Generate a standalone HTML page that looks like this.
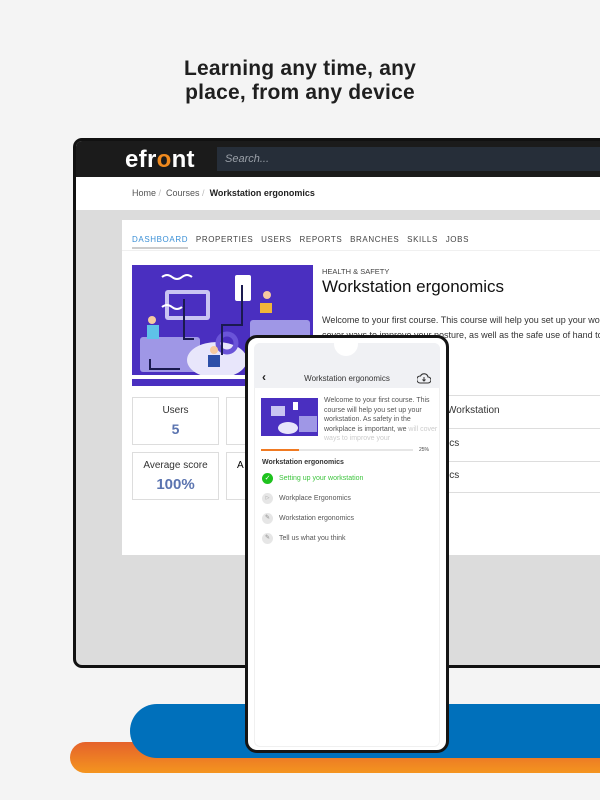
<!DOCTYPE html>
<html><head><meta charset="utf-8"><style>
*{margin:0;padding:0;box-sizing:border-box}
body{width:600px;height:800px;background:#f4f4f4;position:relative;overflow:hidden;font-family:"Liberation Sans",sans-serif}
.abs{position:absolute}
h1{position:absolute;top:57px;left:0;width:600px;text-align:center;font-size:21px;line-height:24px;font-weight:bold;color:#1f1f1f;letter-spacing:0.2px}
.laptop{left:73px;top:138px;width:540px;height:530px;border:3px solid #111;border-radius:9px;background:#dcdcdc;overflow:hidden}
.bar{left:0;top:0;width:100%;height:36px;background:#1b1b1b}
.logo{left:49px;top:5px;color:#fff;font-weight:bold;font-size:24px;letter-spacing:0.3px}
.search{left:141px;top:6px;width:400px;height:24px;background:#262e39;color:#9aa0a8;font-style:italic;font-size:11px;padding:6px 8px}
.crumb{left:0;top:36px;width:100%;height:33px;background:#fff;font-size:9px;color:#555;padding:11px 56px}
.card{left:46px;top:79px;width:500px;height:335px;background:#fff}
.tabs{left:10px;top:15px;font-size:8px;letter-spacing:0.6px;color:#444;word-spacing:5px}
.t{font-size:9px;color:#333}
.box{border:1px solid #ddd;background:#fff;text-align:center}
.phone{left:245px;top:335px;width:204px;height:418px;border:3px solid #151515;border-radius:12px;background:#fff;overflow:hidden}
.li{position:absolute;left:14px;font-size:7px;color:#555;display:flex;align-items:center}
.ic{width:11px;height:11px;border-radius:50%;background:#e6e6e6;margin-right:6px;display:inline-block;position:relative}
</style></head><body>
<h1>Learning any time, any<br>place, from any device</h1>

<div class="abs" style="left:70px;top:742px;width:560px;height:31px;background:linear-gradient(#e5622b,#f4951f);border-radius:16px"></div>
<div class="abs" style="left:130px;top:704px;width:500px;height:54px;background:#0070bb;border-radius:27px"></div>

<div class="abs laptop">
 <div class="abs bar">
  <div class="abs logo">efr<span style="color:#f08a1e">o</span>nt</div>
  <div class="abs search">Search...</div>
 </div>
 <div class="abs crumb">Home <span style="color:#bbb">/</span>&nbsp; Courses <span style="color:#bbb">/</span>&nbsp; <b style="color:#222">Workstation ergonomics</b></div>
 <div class="abs card">
  <div class="abs tabs"><span style="color:#3a8fd6;border-bottom:2px solid #ccc;padding-bottom:3px">DASHBOARD</span> PROPERTIES USERS REPORTS BRANCHES SKILLS JOBS</div>
  <div class="abs" style="left:0;top:30px;width:100%;height:1px;background:#f0f0f0"></div>
  <svg class="abs" style="left:10px;top:45px" width="181" height="121" viewBox="0 0 181 121">
   <rect width="181" height="121" fill="#4a2fc0"/>
   <rect x="33" y="25" width="45" height="30" rx="3" fill="#c9c4f2"/><rect x="37" y="29" width="37" height="22" fill="#4a2fc0"/>
   <rect x="103" y="10" width="16" height="26" rx="2" fill="#fff"/>
   <rect x="118" y="55" width="60" height="50" rx="3" fill="#9f97e6"/>
   <rect x="8" y="72" width="60" height="35" rx="3" fill="#9f97e6"/>
   <ellipse cx="85" cy="95" rx="30" ry="18" fill="#e8e6fb"/>
   <circle cx="95" cy="78" r="9" fill="none" stroke="#6a54d8" stroke-width="5"/>
   <path d="M30 12q5-4 10 0t10 0t10 0" stroke="#fff" fill="none" stroke-width="2"/>
   <path d="M30 42q5-4 10 0t10 0" stroke="#fff" fill="none" stroke-width="2"/>
   <path d="M110 20v40h-20v30 M52 34v40h10 M18 94v10h30" stroke="#1a1a50" fill="none" stroke-width="2"/>
   <rect x="0" y="110" width="181" height="4" fill="#fff"/>
   <circle cx="20" cy="55" r="4" fill="#f5c9a0"/><rect x="15" y="60" width="12" height="14" fill="#5ec2e8"/>
   <circle cx="135" cy="30" r="4" fill="#f5c9a0"/><rect x="128" y="38" width="12" height="10" fill="#f0b53a"/>
   <circle cx="82" cy="85" r="4" fill="#f5c9a0"/><rect x="76" y="90" width="12" height="12" fill="#2d4fa8"/>
  </svg>
  <div class="abs" style="left:200px;top:47px;font-size:7.5px;color:#444">HEALTH &amp; SAFETY</div>
  <div class="abs" style="left:200px;top:57px;font-size:17px;color:#111">Workstation ergonomics</div>
  <div class="abs t" style="left:200px;top:93px;white-space:nowrap;line-height:15px">Welcome to your first course. This course will help you set up your workstation<br>cover ways to improve your posture, as well as the safe use of hand tools</div>
  <div class="abs box" style="left:10px;top:177px;width:87px;height:48px"><div style="font-size:10px;color:#333;margin-top:7px">Users</div><div style="font-size:14px;color:#5b74b0;font-weight:bold;margin-top:5px">5</div></div>
  <div class="abs box" style="left:104px;top:177px;width:87px;height:48px"></div>
  <div class="abs box" style="left:10px;top:232px;width:87px;height:48px"><div style="font-size:10px;color:#333;margin-top:7px">Average score</div><div style="font-size:15px;color:#5b74b0;font-weight:bold;margin-top:5px">100%</div></div>
  <div class="abs box" style="left:104px;top:232px;width:87px;height:48px;text-align:left;padding:7px 10px;font-size:10px">A</div>
  <div class="abs" style="left:320px;top:175px;width:200px;height:1px;background:#ddd"></div>
  <div class="abs t" style="left:325px;top:185px;font-size:10px">Workstation</div>
  <div class="abs" style="left:320px;top:208px;width:200px;height:1px;background:#ddd"></div>
  <div class="abs t" style="left:325px;top:218px;font-size:10px">ics</div>
  <div class="abs" style="left:320px;top:241px;width:200px;height:1px;background:#ddd"></div>
  <div class="abs t" style="left:325px;top:250px;font-size:10px">ics</div>
  <div class="abs" style="left:320px;top:272px;width:200px;height:1px;background:#ddd"></div>
 </div>
</div>

<div class="abs phone">
 <div class="abs" style="left:6px;top:5px;width:186px;height:404px;border-radius:6px;background:#fff;border:1px solid #f0f0f0"></div>
 <div class="abs" style="left:6px;top:5px;width:186px;height:45px;background:#f0f1f4;border-radius:6px 6px 0 0"></div>
 <div class="abs" style="left:86px;top:-6px;width:24px;height:24px;border-radius:50%;background:#fff"></div>
 <div class="abs" style="left:14px;top:32px;font-size:12px;color:#222;font-weight:bold">‹</div>
 <div class="abs" style="left:0;top:36px;width:198px;text-align:center;font-size:8px;color:#333">Workstation ergonomics</div>
 <svg class="abs" style="left:169px;top:35px" width="14" height="11" viewBox="0 0 14 11"><path d="M3 10h8a3 3 0 0 0 0-6 4 4 0 0 0-7.5-1A3.5 3.5 0 0 0 3 10z" fill="none" stroke="#333" stroke-width="1.1"/><path d="M7 4v4M5.5 6.5L7 8l1.5-1.5" stroke="#333" fill="none" stroke-width="1"/></svg>
 <svg class="abs" style="left:13px;top:60px" width="57" height="38" viewBox="0 0 57 38"><rect width="57" height="38" fill="#4a2fc0"/><rect x="10" y="8" width="14" height="10" fill="#c9c4f2"/><rect x="32" y="4" width="5" height="8" fill="#fff"/><rect x="38" y="18" width="18" height="16" fill="#9f97e6"/><ellipse cx="27" cy="30" rx="10" ry="6" fill="#e8e6fb"/></svg>
 <div class="abs" style="left:76px;top:58px;width:116px;font-size:7px;line-height:9.5px;color:#555;height:47px;overflow:hidden">Welcome to your first course. This course will help you set up your workstation. As safety in the workplace is important, we <span style="color:#ccc">will cover ways to improve your</span></div>
 <div class="abs" style="left:13px;top:111px;width:152px;height:2px;background:#e6e6e6"></div>
 <div class="abs" style="left:13px;top:111px;width:38px;height:2px;background:#f07a22"></div>
 <div class="abs" style="left:171px;top:109px;font-size:5px;color:#444">25%</div>
 <div class="abs" style="left:14px;top:121px;font-size:7px;font-weight:bold;color:#333">Workstation ergonomics</div>
 <div class="li" style="top:135px;color:#3ec43e"><span class="ic" style="background:#1ec21e;color:#fff;font-size:7px;text-align:center;line-height:11px">✓</span>Setting up your workstation</div>
 <div class="li" style="top:155px"><span class="ic" style="font-size:5px;color:#999;text-align:center;line-height:11px">▷</span>Workplace Ergonomics</div>
 <div class="li" style="top:175px"><span class="ic" style="font-size:6px;color:#888;text-align:center;line-height:11px">✎</span>Workstation ergonomics</div>
 <div class="li" style="top:195px"><span class="ic" style="font-size:6px;color:#888;text-align:center;line-height:11px">✎</span>Tell us what you think</div>
</div>
</body></html>
